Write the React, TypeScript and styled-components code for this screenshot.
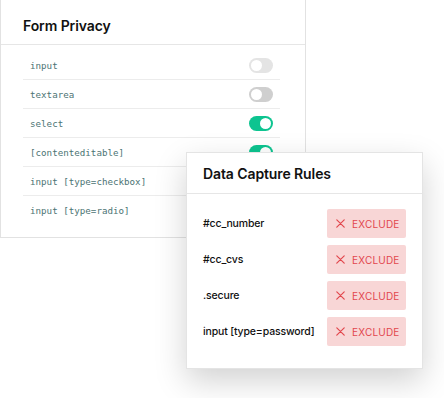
import styled, { createGlobalStyle } from 'styled-components';

const GlobalStyle = createGlobalStyle`
  html, body {
    margin: 0;
    padding: 0;
    background: #ffffff;
  }
  body {
    font-family: Inter, "Noto Sans", sans-serif;
    color: #111;
  }
`;

const privacyFields = [
  { name: 'input', on: false, tone: 'light' },
  { name: 'textarea', on: false, tone: 'dark' },
  { name: 'select', on: true, tone: 'light' },
  { name: '[contenteditable]', on: true, tone: 'light' },
  { name: 'input [type=checkbox]', on: false, tone: 'light' },
  { name: 'input [type=radio]', on: false, tone: 'light' },
];

const captureRules = ['#cc_number', '#cc_cvs', '.secure', 'input [type=password]'];

const CrossIcon = () => (
  <svg width="9" height="9" viewBox="0 0 9 9" fill="none">
    <path d="M0.8 0.8L8.2 8.2M8.2 0.8L0.8 8.2" stroke="currentColor" strokeWidth="1.2" strokeLinecap="round" />
  </svg>
);

const App = () => {
  return (
    <Stage>
      <GlobalStyle />
      <PrivacyCard>
        <CardHeader>
          <Title>Form Privacy</Title>
        </CardHeader>
        <FieldList>
          {privacyFields.map((field) => (
            <FieldRow key={field.name}>
              <FieldName>{field.name}</FieldName>
              <Toggle $on={field.on} $tone={field.tone} />
            </FieldRow>
          ))}
        </FieldList>
      </PrivacyCard>
      <RulesCard>
        <RulesHeader>
          <Title>Data Capture Rules</Title>
        </RulesHeader>
        <RuleList>
          {captureRules.map((rule) => (
            <RuleRow key={rule}>
              <RuleName>{rule}</RuleName>
              <ExcludeButton>
                <CrossIcon />
                <span>EXCLUDE</span>
              </ExcludeButton>
            </RuleRow>
          ))}
        </RuleList>
      </RulesCard>
    </Stage>
  );
};

export default App;

const Stage = styled.div`
  position: relative;
  width: 444px;
  height: 398px;
  overflow: hidden;
`;

const PrivacyCard = styled.section`
  width: 306px;
  height: 238px;
  box-sizing: border-box;
  border: 1px solid #e2e2e2;
  border-top: none;
  background: #fff;
`;

const CardHeader = styled.header`
  height: 45px;
  box-sizing: border-box;
  display: flex;
  align-items: center;
  padding: 7px 22px 0;
  border-bottom: 1px solid #e6e6e6;
`;

const Title = styled.h2`
  margin: 0;
  font-family: Inter, "Noto Sans", sans-serif;
  font-size: 14px;
  font-weight: 600;
  color: #111;
  letter-spacing: -0.1px;
`;

const FieldList = styled.ul`
  list-style: none;
  margin: 6px 25px 0 22px;
  padding: 0;
`;

const FieldRow = styled.li`
  height: 28px;
  display: flex;
  align-items: center;
  justify-content: space-between;
  padding: 0 7px;
  border-bottom: 1px solid #ececec;
  &:last-child {
    border-bottom: none;
  }
`;

const FieldName = styled.span`
  font-family: "DejaVu Sans Mono", "Liberation Mono", monospace;
  font-size: 9.2px;
  color: #4c7474;
`;

const Toggle = styled.span<{ $on: boolean; $tone: string }>`
  position: relative;
  width: 24px;
  height: 15px;
  border-radius: 8px;
  background: ${({ $on, $tone }) => ($on ? '#0dc490' : $tone === 'dark' ? '#cfcfcf' : '#e4e4e4')};
  &::after {
    content: '';
    position: absolute;
    top: 2px;
    left: ${({ $on }) => ($on ? '11px' : '2px')};
    width: 11px;
    height: 11px;
    border-radius: 50%;
    background: #fff;
  }
`;

const RulesCard = styled.section`
  position: absolute;
  left: 186px;
  top: 152px;
  width: 237px;
  height: 217px;
  box-sizing: border-box;
  background: #fff;
  border: 1px solid #e4e4e4;
  box-shadow: 0 12px 30px rgba(0, 0, 0, 0.18);
`;

const RulesHeader = styled.header`
  height: 41px;
  box-sizing: border-box;
  display: flex;
  align-items: center;
  padding: 0 16px;
  border-bottom: 1px solid #e6e6e6;
`;

const RuleList = styled.div`
  display: flex;
  flex-direction: column;
  gap: 7px;
  padding: 15px 16px 0 16px;
`;

const RuleRow = styled.div`
  display: flex;
  align-items: center;
  justify-content: space-between;
`;

const RuleName = styled.span`
  font-family: Inter, "Noto Sans", sans-serif;
  font-size: 10.5px;
  font-weight: 500;
  color: #111;
  letter-spacing: -0.15px;
`;

const ExcludeButton = styled.button`
  width: 79px;
  height: 29px;
  display: flex;
  align-items: center;
  gap: 7px;
  padding: 0 0 0 9px;
  border: none;
  border-radius: 2px;
  background: #f8d6d6;
  color: #e2474d;
  font-family: Inter, "Noto Sans", sans-serif;
  font-size: 10px;
  font-weight: 400;
  letter-spacing: 0.2px;
  cursor: pointer;
`;
